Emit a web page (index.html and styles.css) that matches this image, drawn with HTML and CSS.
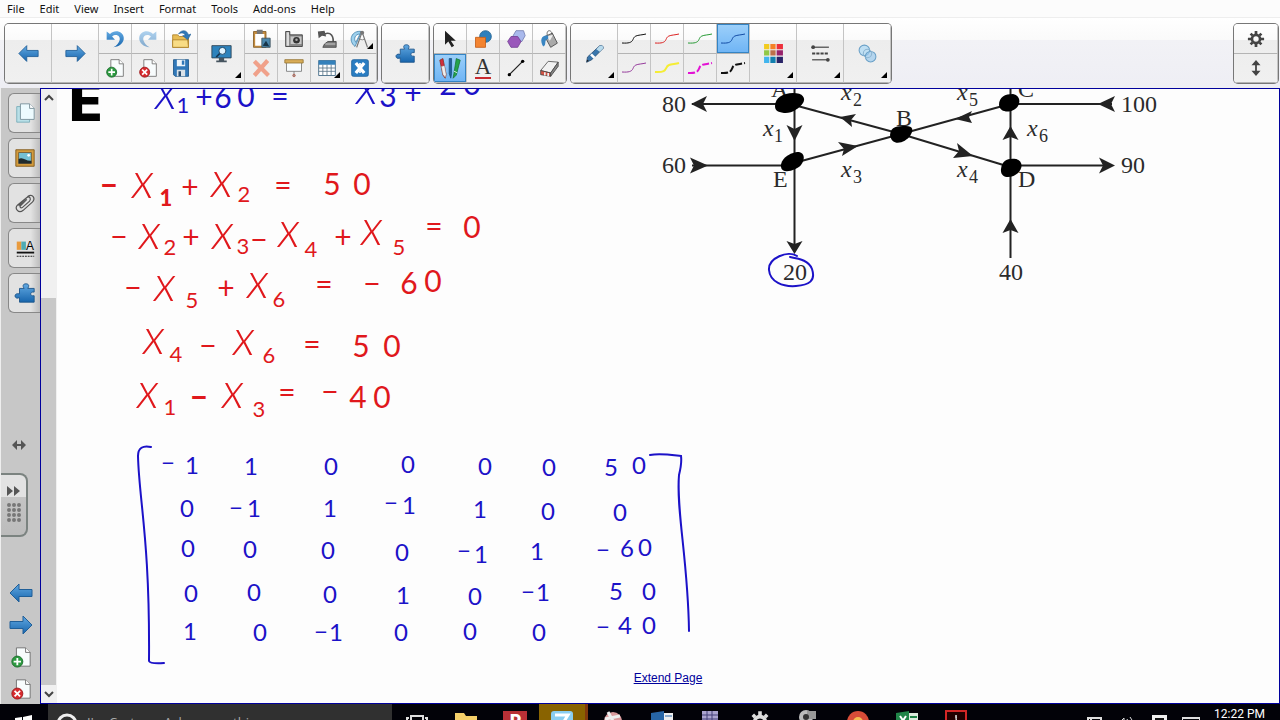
FILE: index.html
```html
<!DOCTYPE html>
<html lang="en">
<head>
<meta charset="utf-8">
<title>Notebook</title>
<link rel="stylesheet" href="styles.css">
</head>
<body>
<svg class="defs" aria-hidden="true">
  <defs>
    <linearGradient id="blue" x1="0" y1="0" x2="0" y2="1"><stop offset="0" stop-color="#62a9e2"/><stop offset="1" stop-color="#1765ad"/></linearGradient>
    <symbol id="left" viewBox="0 0 24 20"><path d="M1 10L10 1v5.500h13v7H10V19z" fill="url(#blue)" stroke="#205f98"/></symbol>
    <symbol id="right" viewBox="0 0 24 20"><path d="M23 10L14 1v5.500H1v7h13V19z" fill="url(#blue)" stroke="#205f98"/></symbol>
    <symbol id="undo" viewBox="0 0 24 24"><path d="M2 3v10h10L8.500 9C13 5 19 8 17.500 13.500 16.500 17 14 20 10 22c8-1 13-6 12.500-11.500C22 3 12 0 6 6z" fill="url(#blue)"/></symbol>
    <symbol id="page" viewBox="0 0 24 24"><path d="M7 2h10l5 5v15H7z" fill="#f8fcfd" stroke="#6d6d6d"/><path d="M17 2v5h5" fill="#fff" stroke="#6d6d6d"/></symbol>
    <symbol id="addpage" viewBox="0 0 24 24"><use href="#page"/><circle cx="8" cy="17" r="6" fill="#2d9a41" stroke="#1b6b2b"/><path d="M8 13v8M4 17h8" stroke="#fff" stroke-width="2"/></symbol>
    <symbol id="delpage" viewBox="0 0 24 24"><use href="#page"/><circle cx="8" cy="17" r="6" fill="#d82b2f" stroke="#99191d"/><path d="M5 14l6 6M11 14l-6 6" stroke="#fff" stroke-width="2"/></symbol>
    <symbol id="open" viewBox="0 0 24 24"><path d="M2 7h6l2 2h11v13H2z" fill="#e8bd55" stroke="#ad8129"/><path d="M2 13h18l1 9H2z" fill="#f8dc85" stroke="#ad8129"/><path d="M9 6c4-6 10-5 12 1l3-1-4 7-6-5 3-.5C15.500 4.500 13 4 9 6z" fill="#3179b8" stroke="#215d93" stroke-width=".6"/></symbol>
    <symbol id="save" viewBox="0 0 24 24"><path d="M3 2h18v20H5l-2-2z" fill="#3178b8" stroke="#1d5587"/><path d="M7 2h10v8H7z" fill="#eef5fa"/><path d="M13 3h3v5h-3z" fill="#3178b8"/><path d="M7 14h10v8H7z" fill="#dae2e8"/><path d="M9 16h3v6H9z" fill="#294d70"/></symbol>
    <symbol id="screen" viewBox="0 0 24 24"><path d="M1 3h22v14H1z" fill="#2d83bd" stroke="#2d4356"/><path d="M9 17h6v3h3v2H6v-2h3z" fill="#46545f"/><circle cx="13" cy="9" r="4" fill="#dff3ff" stroke="#173e5d"/><path d="M10 12l-4 4" stroke="#143653" stroke-width="2"/></symbol>
    <symbol id="paste" viewBox="0 0 24 24"><path d="M3 3h15v19H3z" fill="#c38b3d" stroke="#835d28"/><path d="M5 6h11v14H5z" fill="#fff"/><path d="M7 1h7v5H7z" fill="#777"/><path d="M13 11h10v11H13z" fill="#4a87ad" stroke="#3b4d58"/><path d="M14 20l4-6 4 7z" fill="#17354a"/></symbol>
    <symbol id="camera" viewBox="0 0 24 24"><path d="M2 3h5v4h15v14H2z" fill="#8a8a8a" stroke="#393939"/><path d="M3 4h3v16H3z" fill="#ddd"/><path d="M8 9h13v9H8z" fill="#c7c7c7"/><circle cx="15" cy="13.500" r="4" fill="#333"/><circle cx="15" cy="13" r="1.500" fill="#aaa"/></symbol>
    <symbol id="doccam" viewBox="0 0 24 24"><path d="M9 6c7-3 12 2 10 13" fill="none" stroke="#555" stroke-width="2"/><path d="M1 3l8-1 2 7-5-1-4 3z" fill="#555"/><path d="M9 18l4-3h10v7H7z" fill="#777" stroke="#444"/><path d="M10 18h12" stroke="#ddd"/></symbol>
    <symbol id="compass" viewBox="0 0 24 24"><path d="M14 3C2 1-3 14 6 21z" fill="#9ed1ee" stroke="#4886ae"/><path d="M12 6c-6 0-8 6-5 10z" fill="#fff" stroke="#4886ae"/><path d="M14 5L8 22M15 5l6 17" stroke="#777" stroke-width="1.500"/><circle cx="14.500" cy="4.500" r="2.500" fill="#777"/><path d="M11 12q4 2 7 0" fill="none" stroke="#777"/></symbol>
    <symbol id="delete" viewBox="0 0 24 24"><path d="M4 4l17 17M20 3L4 21" stroke="#f0a18a" stroke-width="5"/></symbol>
    <symbol id="shade" viewBox="0 0 24 24"><path d="M3 4h18v12H3z" fill="#f7fcff" stroke="#777"/><path d="M1 2h22v4H1z" fill="#d7ad59" stroke="#967636"/><path d="M12 16v4" stroke="#777"/><circle cx="12" cy="21" r="1.500" fill="#999" stroke="#b85c4a"/></symbol>
    <symbol id="table" viewBox="0 0 24 24"><path d="M2 3h20v18H2z" fill="#fff" stroke="#37617f"/><path d="M2 3h20v5H2z" fill="#3481bb"/><path d="M7 8v13M12 8v13M17 8v13M2 12h20M2 16h20" stroke="#5b7688"/></symbol>
    <symbol id="active" viewBox="0 0 24 24"><rect x="2" y="2" width="20" height="20" rx="2" fill="#2a7dc2" stroke="#1f639d"/><path d="M7 6l10 12M17 6L7 18" fill="none" stroke="#fff" stroke-width="4"/><path d="M12 6v3M12 15v3" stroke="#fff" stroke-width="2"/></symbol>
    <symbol id="puzzle" viewBox="0 0 24 24"><path d="M6 7h5c-2-3-1-5 2-5s4 2 2 5h7v4c-5-1-5 5 0 4v7H6v-5c-6 3-7-6 0-4z" fill="url(#blue)" stroke="#1f568b"/></symbol>
    <symbol id="cursor" viewBox="0 0 24 24"><path d="M6 2v17l4-4 4 7 3-2-4-6h6z" fill="#222"/></symbol>
    <symbol id="shapes" viewBox="0 0 24 24"><circle cx="15" cy="9" r="7" fill="#2e80bd" stroke="#20608f"/><path d="M3 10h12v12H3z" fill="#f38431" stroke="#c45e18"/></symbol>
    <symbol id="poly" viewBox="0 0 24 24"><path d="M12 2h9l2 6-4 7h-8l-3-6z" fill="#a9b9ec" stroke="#7580b3"/><path d="M6 9h8l4 6-4 7H6l-4-7z" fill="#9957ba" stroke="#744094"/></symbol>
    <symbol id="fill" viewBox="0 0 24 24"><path d="M7 9l9-4 6 12-8 5z" fill="#aaa" stroke="#444"/><path d="M10 8c-2-8 6-8 6 0" fill="none" stroke="#555"/><path d="M9 9l8-2-4 7z" fill="#eee"/><path d="M11 8C2 7 1 14 5 21c5-2 0-8 6-9z" fill="#3985c2"/></symbol>
    <symbol id="pens" viewBox="0 0 30 28"><path d="M2 4l4-2 4 20-1 5-3-4z" fill="#d22e3e" stroke="#832"/><path d="M4 12l4-1 2 11-1 4-3-4z" fill="#eee" stroke="#999" stroke-width=".5"/><path d="M14 2h3v19l-1 6-2-6z" fill="#215f9b" stroke="#165282"/><path d="M23 2l5 2-5 19-4 4 1-6z" fill="#24a34b" stroke="#17753a"/><path d="M20 18l4 2" stroke="#fff"/></symbol>
    <symbol id="line" viewBox="0 0 24 24"><path d="M4 20L20 4" stroke="#222" stroke-width="1.500"/><circle cx="4" cy="20" r="2"/><circle cx="20" cy="4" r="2"/></symbol>
    <symbol id="eraser" viewBox="0 0 24 24"><path d="M2 15L11 4l12 1-9 13z" fill="#f2f2f2" stroke="#555"/><path d="M2 15l12 3v4L2 20z" fill="#d55344" stroke="#444"/><path d="M14 18l9-13v5l-9 12z" fill="#888" stroke="#444"/><path d="M7 17v4M11 18v4" stroke="#eee" stroke-width="2"/></symbol>
    <symbol id="pen" viewBox="0 0 24 24"><path d="M3 22l1-6L18 3q4-1 4 3L9 19z" fill="#3976ac" stroke="#315578"/><path d="M14 7l4-4q4-1 4 3l-4 4z" fill="#b9dbed"/><path d="M8 13l4 4" stroke="#fff" stroke-width="3"/><path d="M3 22l.5-3 2 1z" fill="#222"/></symbol>
    <symbol id="stroke" viewBox="0 0 26 14"><path d="M1 11c14 1 9-5 14-7 2-1 6-1 10-2" fill="none" stroke="currentColor"/></symbol>
    <symbol id="thick" viewBox="0 0 26 14"><path d="M1 11c14 1 9-5 14-7 2-1 6-1 10-2" fill="none" stroke="currentColor" stroke-width="2"/></symbol>
    <symbol id="dash" viewBox="0 0 26 14"><path d="M1 12c14 1 9-6 14-8 2-1 6-1 10-2" fill="none" stroke="currentColor" stroke-width="2" stroke-dasharray="7 2"/></symbol>
    <symbol id="palette" viewBox="0 0 20 20"><path d="M1 1h5v5H1z" fill="#f2cb1f"/><path d="M7 1h5v5H7z" fill="#f58126"/><path d="M13 1h6v5h-6z" fill="#ed303b"/><path d="M1 7h5v5H1z" fill="#91c847"/><path d="M7 7h5v5H7z" fill="#bd704a"/><path d="M13 7h6v5h-6z" fill="#97216b"/><path d="M1 13h5v6H1z" fill="#42b5ee"/><path d="M7 13h5v6H7z" fill="#127fae"/><path d="M13 13h6v6h-6z" fill="#292467"/></symbol>
    <symbol id="lines" viewBox="0 0 20 20"><path d="M2 4h16M2 16h16" stroke="#666" stroke-width="1.500"/><path d="M2 10h16" stroke="#444" stroke-width="2" stroke-dasharray="3 1"/><circle cx="3" cy="4" r="1.800" fill="#444"/><circle cx="17" cy="16" r="1.800" fill="#444"/></symbol>
    <symbol id="clear" viewBox="0 0 20 20"><circle cx="7" cy="7" r="5" fill="#bfdff3" stroke="#6aa0c7"/><circle cx="13" cy="13" r="5" fill="#9bcbee" fill-opacity=".7" stroke="#6aa0c7"/><circle cx="10" cy="10" r="4" fill="none" stroke="#8db5d1"/></symbol>
    <symbol id="gear" viewBox="0 0 20 20"><circle cx="10" cy="10" r="4.500" fill="none" stroke="currentColor" stroke-width="3"/><path d="M10 1v4M10 15v4M1 10h4M15 10h4M4 4l2 2M14 14l2 2M16 4l-2 2M4 16l2-2" stroke="currentColor" stroke-width="3"/></symbol>
    <symbol id="updown" viewBox="0 0 20 20"><path d="M10 1l5 6H5zM10 19l5-6H5z" fill="#444"/><path d="M10 5v10" stroke="#444" stroke-width="2"/></symbol>
    <symbol id="pages" viewBox="0 0 24 24"><path d="M3 5h14v17H3z" fill="#b9e0e8" stroke="#79aeba"/><path d="M7 2h10l5 5v12H7z" fill="#edfbff" stroke="#79919a"/><path d="M17 2v5h5" fill="#fff" stroke="#79919a"/></symbol>
    <symbol id="gallery" viewBox="0 0 24 24"><path d="M2 3h20v18H2z" fill="#d39b3c" stroke="#815b1e"/><path d="M5 6h14v12H5z" fill="#74c0d3" stroke="#7b5f36"/><path d="M5 13c5-3 8 3 14 2v3H5z" fill="#202b2d"/><circle cx="16" cy="9" r="1.500" fill="#fff"/></symbol>
    <symbol id="clip" viewBox="0 0 24 24"><path d="M5 15L15 5c5-4 9 2 5 6L10 20c-5 4-10-2-6-6L14 6c3-2 5 1 3 4l-8 7c-2 1-3-1-2-2l7-7" fill="none" stroke="#555" stroke-width="1.300"/></symbol>
  </defs>
</svg>

<div class="app">
  <nav class="menu">
    <button>File</button><button>Edit</button><button>View</button><button>Insert</button><button>Format</button><button>Tools</button><button>Add-ons</button><button>Help</button>
  </nav>

  <div class="toolbar">
    <div class="group">
      <button class="big" aria-label="Previous page"><svg><use href="#left"/></svg></button>
      <button class="big" aria-label="Next page"><svg><use href="#right"/></svg></button>
      <button aria-label="Undo"><svg><use href="#undo"/></svg></button>
      <button aria-label="Add page"><svg><use href="#addpage"/></svg></button>
      <button aria-label="Redo" class="faded"><svg><use href="#undo" transform="matrix(-1 0 0 1 20 0)"/></svg></button>
      <button aria-label="Delete page"><svg><use href="#delpage"/></svg></button>
      <button aria-label="Open"><svg><use href="#open"/></svg></button>
      <button aria-label="Save"><svg><use href="#save"/></svg></button>
      <button class="big more" aria-label="View screens"><svg><use href="#screen"/></svg></button>
      <button aria-label="Paste"><svg><use href="#paste"/></svg></button>
      <button aria-label="Delete"><svg><use href="#delete"/></svg></button>
      <button aria-label="Capture"><svg><use href="#camera"/></svg></button>
      <button aria-label="Screen shade"><svg><use href="#shade"/></svg></button>
      <button aria-label="Document camera"><svg><use href="#doccam"/></svg></button>
      <button class="more" aria-label="Table"><svg><use href="#table"/></svg></button>
      <button class="more" aria-label="Measurement tools"><svg><use href="#compass"/></svg></button>
      <button aria-label="Activities"><svg><use href="#active"/></svg></button>
    </div>
    <div class="group">
      <button class="big" aria-label="Add-ons"><svg><use href="#puzzle"/></svg></button>
    </div>
    <div class="group">
      <button aria-label="Select"><svg><use href="#cursor"/></svg></button>
      <button class="on" aria-label="Pens"><svg class="pens"><use href="#pens"/></svg></button>
      <button aria-label="Shapes"><svg><use href="#shapes"/></svg></button>
      <button class="letter" aria-label="Text"><span>A</span></button>
      <button aria-label="Polygons"><svg><use href="#poly"/></svg></button>
      <button aria-label="Lines"><svg><use href="#line"/></svg></button>
      <button aria-label="Fill"><svg><use href="#fill"/></svg></button>
      <button aria-label="Eraser"><svg><use href="#eraser"/></svg></button>
    </div>
    <div class="group">
      <button class="big more" aria-label="Pen type"><svg><use href="#pen"/></svg></button>
      <button class="c-black" aria-label="Black pen"><svg class="wide"><use href="#stroke"/></svg></button>
      <button class="c-purple" aria-label="Purple pen"><svg class="wide"><use href="#stroke"/></svg></button>
      <button class="c-red" aria-label="Red pen"><svg class="wide"><use href="#stroke"/></svg></button>
      <button class="c-yellow" aria-label="Yellow highlighter"><svg class="wide"><use href="#thick"/></svg></button>
      <button class="c-green" aria-label="Green pen"><svg class="wide"><use href="#stroke"/></svg></button>
      <button class="c-pink" aria-label="Pink dashed pen"><svg class="wide"><use href="#dash"/></svg></button>
      <button class="c-blue on" aria-label="Blue pen"><svg class="wide"><use href="#stroke"/></svg></button>
      <button class="c-black" aria-label="Black dashed pen"><svg class="wide"><use href="#dash"/></svg></button>
      <button class="big more" aria-label="Colour"><svg><use href="#palette"/></svg></button>
      <button class="big more" aria-label="Line style"><svg><use href="#lines"/></svg></button>
      <button class="big more" aria-label="Transparency"><svg><use href="#clear"/></svg></button>
    </div>
    <div class="group settings">
      <button aria-label="Settings"><svg><use href="#gear"/></svg></button>
      <button aria-label="Move toolbar"><svg><use href="#updown"/></svg></button>
    </div>
  </div>

  <div class="work">
    <aside class="side">
      <div class="tabs">
        <button aria-label="Pages"><svg><use href="#pages"/></svg></button>
        <button aria-label="Gallery"><svg><use href="#gallery"/></svg></button>
        <button aria-label="Attachments"><svg><use href="#clip"/></svg></button>
        <button aria-label="Properties"><svg viewBox="0 0 24 24"><path d="M3 5h5v9H3z" fill="#e99b3e"/><path d="M8 5h5v9H8z" fill="#4eabb5"/><text x="13" y="14" font-size="13">A</text><path d="M3 17h19" stroke="#111" stroke-width="2"/><path d="M3 21h19" stroke="#111" stroke-dasharray="2 1"/></svg></button>
        <button aria-label="Add-ons"><svg><use href="#puzzle"/></svg></button>
      </div>
      <button class="resize" aria-label="Resize"><svg viewBox="0 0 16 12"><path d="M1 6l5-5v4h4V1l5 5-5 5V7H6v4z" fill="#555"/></svg></button>
      <button class="handle" aria-label="Expand"><svg viewBox="0 0 16 44"><path d="M1 3l6 5-6 5zM8 3l6 5-6 5z" fill="#555"/><path d="M3 22h12M3 27h12M3 32h12M3 37h12" stroke="#777" stroke-width="4" stroke-dasharray="0 5" stroke-linecap="round"/></svg></button>
      <div class="paging">
        <button aria-label="Previous page"><svg><use href="#left"/></svg></button>
        <button aria-label="Next page"><svg><use href="#right"/></svg></button>
        <button aria-label="Add page"><svg><use href="#addpage"/></svg></button>
        <button aria-label="Delete page"><svg><use href="#delpage"/></svg></button>
      </div>
    </aside>

    <div class="scroll">
      <button aria-label="Scroll up"><svg viewBox="0 0 10 8"><path d="M1 6l4-4 4 4" fill="none" stroke="#444" stroke-width="2"/></svg></button>
      <div class="track"><div class="thumb"></div></div>
      <button aria-label="Scroll down"><svg viewBox="0 0 10 8"><path d="M1 2l4 4 4-4" fill="none" stroke="#444" stroke-width="2"/></svg></button>
    </div>

    <main class="canvas">
      <svg class="ink">
        <g transform="translate(-57 -89)">
          <g class="net">
            <path class="edges" d="M692 104H790M794.500 80V250M692 165.500H794M794 105L901 134L1010 167M794 163L901 134L1010 104M1010 104H1112M1010 165.500H1108M1010.500 80V258"/>
            <g class="heads">
              <path d="M691 104l16-8-4 8 4 8z"/><path d="M708 165.500l-18-8 4 8-4 8z"/>
              <path d="M794.500 141l-8-16 8 4 8-4z"/><path d="M794.500 254l-8-13 8 3 8-3z"/>
              <path d="M1098 104l17-8-4 8 4 8z"/><path d="M1115 165.500l-16-8 4 8-4 8z"/>
              <path d="M1010.500 126l-8 14 8-3 8 3z"/><path d="M1010.500 219l-8 14 8-3 8 3z"/>
              <path d="M840 117l12 10-1-7 5-6z"/><path d="M955 119l17-8-3 6 3 6z"/>
              <path d="M858 146l-20-4 6 7-2 7z"/><path d="M973 156l-16-13 2 8-6 7z"/>
            </g>
            <text x="662" y="112">80</text><text x="662" y="173">60</text><text x="1121" y="112">100</text><text x="1121" y="173">90</text>
            <text x="783" y="280">20</text><text x="999" y="280">40</text>
            <text x="771" y="97">A</text><text x="896" y="126">B</text><text x="1018" y="97">C</text><text x="1018" y="187">D</text><text x="773" y="187">E</text>
            <text x="763 774" y="136 142"><tspan class="i">x</tspan><tspan class="s">1</tspan></text>
            <text x="841 853" y="100 106"><tspan class="i">x</tspan><tspan class="s">2</tspan></text>
            <text x="841 853" y="177 183"><tspan class="i">x</tspan><tspan class="s">3</tspan></text>
            <text x="957 969" y="177 183"><tspan class="i">x</tspan><tspan class="s">4</tspan></text>
            <text x="957 969" y="100 106"><tspan class="i">x</tspan><tspan class="s">5</tspan></text>
            <text x="1027 1039" y="136 142"><tspan class="i">x</tspan><tspan class="s">6</tspan></text>
          </g>
          <g class="nodes">
            <path d="M775 106c0-8 8-13 18-13s13 5 10 10-12 11-19 10-9-3-9-7z"/>
            <path d="M781 167c-1-8 9-15 18-15 6 1 6 8 2 13s-19 10-20 2z"/>
            <path d="M890 135c1-9 7-9 16-9 7 0 8 4 4 10s-18 12-20-1z"/>
            <path d="M999 105c0-8 6-11 14-11 6 1 8 7 5 12-4 7-18 8-19-1z"/>
            <path d="M1001 169c1-9 7-11 15-10 7 2 7 9 2 14s-18 7-17-4z"/>
          </g>
          <path class="pen blue" d="M797 256C788 250 768 258 769 270c1 12 14 17 27 16 13-1 20-5 16-17-3-8-11-10-22-12"/>

          <text class="marker" x="67" y="121">E</text>
          <text class="hand blue" x="166 183 204 223 246 280 367 388 413 448 472" y="109 113 108 108 107 107 104 107 104 95 95"><tspan class="v">x</tspan><tspan class="s">1</tspan>+60=<tspan class="v">x</tspan>3+20</text>
          <text class="hand red" x="109 143 166 190 222 244 283 332 362" y="196 198 206 198 197 202 196 195 195"><tspan class="b">−</tspan><tspan class="v">x</tspan><tspan class="s b">1</tspan>+<tspan class="v">x</tspan><tspan class="s">2</tspan>=50</text>
          <text class="hand red" x="119 150 170 191 223 243 259 289 311 343 372 399 434 472" y="247 249 255 248 249 254 250 247 257 248 245 255 237 238">−<tspan class="v">x</tspan><tspan class="s">2</tspan>+<tspan class="v">x</tspan><tspan class="s">3</tspan>−<tspan class="v">x</tspan><tspan class="s">4</tspan>+<tspan class="v">x</tspan><tspan class="s">5</tspan>=0</text>
          <text class="hand red" x="133 165 192 226 258 279 324 372 409 433" y="298 301 308 299 298 307 295 294 294 292">−<tspan class="v">x</tspan><tspan class="s">5</tspan>+<tspan class="v">x</tspan><tspan class="s">6</tspan>=−60</text>
          <text class="hand red" x="154 176 208 244 269 312 361 392" y="354 362 356 355 363 355 357 357"><tspan class="v">x</tspan><tspan class="s">4</tspan>−<tspan class="v">x</tspan><tspan class="s">6</tspan>=50</text>
          <text class="hand red" x="148 170 199 233 259 287 330 358 382" y="408 415 408 408 417 403 402 408 408"><tspan class="v">x</tspan><tspan class="s">1</tspan><tspan class="b">−</tspan><tspan class="v">x</tspan><tspan class="s">3</tspan>=−40</text>

          <path class="pen blue" d="M151 447C143 445 138 448 138 456C139 500 150 540 149 661Q150 664 164 663"/>
          <path class="pen blue" d="M650 455C660 453 672 455 681 456Q682 463 679 475C676 510 688 560 689 631"/>
          <g class="hand blue matrix">
            <text x="168 192 251 331 408 485 549 611 639" y="471 474 475 475 473 475 476 476 474">−11000050</text>
            <text x="187 236 254 330 391 409 480 548 620" y="517 516 517 517 511 514 518 520 521">0−11−1100</text>
            <text x="188 250 328 402 464 481 537 603 627 645" y="557 558 559 561 559 563 560 558 557 556">0000−11−60</text>
            <text x="191 254 330 403 475 528 543 616 649" y="602 601 603 604 605 600 601 600 600">00010−150</text>
            <text x="190 260 321 336 401 470 539 603 625 649" y="640 641 640 641 641 640 641 635 634 634">10−1000−40</text>
          </g>
        </g>
      </svg>
      <a class="extend" href="#">Extend Page</a>
    </main>
  </div>

  <footer class="taskbar">
    <button class="start" aria-label="Start"><svg viewBox="0 0 18 18"><path d="M0 3l7-1v7H0zM8 2l9-2v9H8zM0 10h7v6l-7-1zM8 10h9v8l-9-1z" fill="#fff"/></svg></button>
    <div class="search"><svg viewBox="0 0 22 22"><circle cx="11" cy="11" r="9" fill="none" stroke="#eee" stroke-width="3"/></svg><span>I'm Cortana. Ask me anything.</span></div>
    <div class="apps">
      <button aria-label="Task view"><svg viewBox="0 0 24 24"><path d="M6 6h12v12H6zM4 8H2v8h2M20 8h2v8h-2" fill="none" stroke="#ddd" stroke-width="2"/></svg></button>
      <button aria-label="Files"><svg viewBox="0 0 24 24"><path d="M1 3h9l2 3h11v16H1z" fill="#f4cf69"/></svg></button>
      <button aria-label="PowerPoint"><svg viewBox="0 0 24 24"><path d="M0 1h24v22H0z" fill="#b93036"/><text x="6" y="18" font-size="20" font-weight="700" fill="#fff">P</text></svg></button>
      <button class="current" aria-label="Notebook"><svg viewBox="0 0 24 24"><rect x="1" y="1" width="22" height="22" rx="3" fill="#8acdf0"/><path d="M5 5h13l-5 8" fill="none" stroke="#fff" stroke-width="3"/></svg></button>
      <button aria-label="Paint"><svg viewBox="0 0 24 24"><circle cx="12" cy="11" r="9" fill="#d99a9c"/><path d="M7 2l10 18M4 9l15-3" stroke="#eee" stroke-width="3"/></svg></button>
      <button aria-label="Word"><svg viewBox="0 0 24 24"><path d="M9 3h14v20H9z" fill="#eee"/><path d="M1 3l13-2v22L1 21z" fill="#2765a6"/><path d="M15 6h7" stroke="#2765a6"/></svg></button>
      <button aria-label="Server"><svg viewBox="0 0 24 24"><path d="M3 1h16v22H3z" fill="#aaa3ce"/><path d="M8 1v22M13 1v22M3 5h16M3 9h16" stroke="#444078"/></svg></button>
      <button class="white" aria-label="Settings"><svg viewBox="0 0 20 20"><use href="#gear"/></svg></button>
      <button aria-label="Camera"><svg viewBox="0 0 24 24"><circle cx="9" cy="7" r="7" fill="#bbb"/><path d="M10 1h9v8h-9z" fill="#999"/><circle cx="9" cy="7" r="3" fill="#333"/></svg></button>
      <button aria-label="Browser"><svg viewBox="0 0 24 24"><circle cx="12" cy="12" r="11" fill="#d84c38"/><circle cx="12" cy="12" r="5" fill="#f5bc50"/></svg></button>
      <button aria-label="Excel"><svg viewBox="0 0 24 24"><path d="M9 3h14v20H9z" fill="#ddebdd"/><path d="M1 3l13-2v22L1 21z" fill="#208448"/><path d="M5 6l6 9M11 6l-6 9" stroke="#fff" stroke-width="2"/><path d="M15 7h7" stroke="#208448" stroke-width="2"/></svg></button>
      <button aria-label="Reader"><svg viewBox="0 0 24 24"><path d="M2 1h20v22H2z" fill="#200" stroke="#d32626" stroke-width="2"/><path d="M12 5c-2 6 5 8 7 9M12 5c2 5-3 10-6 11" fill="none" stroke="#ddd"/></svg></button>
    </div>
    <div class="tray">
      <svg viewBox="0 0 18 14"><path d="M2 3h13v9H2zM5 3v9" fill="none" stroke="#ddd" stroke-width="2"/></svg>
      <svg viewBox="0 0 18 14"><path d="M2 7l4-4v9M9 4q3 3 0 7M12 2q5 6 0 11" fill="none" stroke="#ddd"/></svg>
      <svg viewBox="0 0 18 14"><path d="M2 0h15v14H2z" fill="#eee"/><path d="M5 4h9" stroke="#111" stroke-width="2"/></svg>
      <svg viewBox="0 0 18 14"><path d="M0 3h18v11H0z" fill="none" stroke="#ddd" stroke-width="2"/></svg>
      <time>12:22 PM</time>
    </div>
  </footer>
</div>
</body>
</html>
```
FILE: styles.css
```css
* { box-sizing: border-box; }
body { margin: 0; background: #fcfcfc; color: #111; font-family: "Open Sans", "Noto Sans", sans-serif; }
button { display: flex; align-items: center; justify-content: center; margin: 0; padding: 0; border: 0; background: none; color: inherit; font: inherit; }
.defs { position: absolute; width: 0; height: 0; }
.app { display: flex; flex-direction: column; height: 100vh; overflow: hidden; }

.menu { display: flex; gap: 15px; padding: 0 7px; height: 18px; flex: none; font-family: "Noto Sans", sans-serif; font-size: 11px; line-height: 18px; border-bottom: 1px solid #eee; }

.toolbar { display: flex; gap: 5px; flex: none; height: 70px; padding: 6px 2px 5px 5px; background: linear-gradient(#fff, #fafafa 22px, #f2f2f6 22px, #eeeef4); }
.group { display: grid; grid-auto-flow: column; grid-template-rows: 30px 29px; border-radius: 4px; overflow: hidden; box-shadow: 0 0 0 1px #777; background: linear-gradient(#fff, #fafafa 16px, #ededed 16px, #f0f0f0); flex: none; }
.group button { position: relative; width: 33px; border-right: 1px solid #c4c4c4; border-bottom: 1px solid #b4b4b4; }
.group .big { grid-row: span 2; width: 47px; }
.group svg { width: 20px; height: 20px; }
.group .big svg { width: 21px; height: 21px; }
.group .wide { width: 26px; height: 24px; }
.group .pens { width: 24px; height: 22px; }
.group .faded svg { opacity: 0.5; }
.group .on { background: linear-gradient(#9dd0fa, #6eb4f5); box-shadow: inset 0 0 0 1px #3484c4; }
.more::after { content: ""; position: absolute; right: 3px; bottom: 4px; border-left: 6px solid transparent; border-bottom: 6px solid #000; }
.letter span { font-family: "Liberation Serif", serif; font-size: 23px; line-height: 20px; color: #333; border-bottom: 2px solid #c8292f; }
.settings { margin-left: auto; color: #444; }
.settings button { width: 44px; }
.settings svg { width: 18px; height: 18px; }
.c-black { color: #111; }
.c-red { color: #d22; }
.c-green { color: #279b35; }
.c-blue { color: #124ba5; }
.c-purple { color: #963b9c; }
.c-yellow { color: #f5ed35; }
.c-pink { color: #e313d4; }

.work { display: flex; flex: 1; min-height: 0; }
.side { display: flex; flex-direction: column; width: 40px; flex: none; padding-top: 5px; background: #c7c7c7; border-left: 1px solid #eee; }
.side svg { width: 22px; height: 22px; }
.tabs { display: flex; flex-direction: column; gap: 5px; margin-bottom: 80px; padding-left: 7px; }
.tabs button { height: 40px; border: 1px solid #888; border-right: 0; border-radius: 6px 0 0 6px; background: linear-gradient(90deg, #e2e2e2 70%, #bdbdbd); }
.tabs text { font-family: "Liberation Sans", sans-serif; }
.resize { width: 35px; height: 12px; margin-top: auto; }
.side .resize svg { width: 16px; height: 12px; }
.handle { width: 27px; height: 64px; margin: 22px 0 auto; border: 2px solid #7b8380; border-left: 0; border-radius: 0 8px 8px 0; background: linear-gradient(#e2e2e2 22px, #c4c4c4 22px, #bcbcbc); }
.side .handle svg { width: 16px; height: 44px; }
.paging { display: flex; flex-direction: column; gap: 10px; padding-bottom: 4px; }
.side .paging svg { width: 24px; height: 22px; }

.scroll { display: flex; flex-direction: column; width: 17px; flex: none; background: #f0f0f0; border: 1px solid #00009c; border-right: 0; }
.scroll button { height: 18px; }
.scroll svg { width: 10px; height: 8px; }
.track { display: flex; flex-direction: column; justify-content: flex-end; flex: 1; padding-right: 1px; }
.thumb { height: 67%; background: #c8c8c8; }

.canvas { display: flex; flex-direction: column; flex: 1; min-width: 0; background: #fdfdfd; border: 1px solid #00009c; border-left: 0; }
.ink { display: block; flex: 1; min-height: 0; width: 100%; }
.extend { align-self: center; flex: none; margin: -32px 0 18px; color: #00009c; font-family: "Liberation Sans", sans-serif; font-size: 12px; line-height: 14px; }

.net { font-family: "Liberation Serif", serif; font-size: 24px; fill: #2b2b2b; }
.net .i { font-style: italic; }
.net .s { font-size: 18px; }
.edges { fill: none; stroke: #222; stroke-width: 2px; }
.heads { fill: #222; }
.nodes { fill: #000; }
.hand { font-family: Lato, sans-serif; font-size: 30px; text-anchor: middle; }
.hand .v { font-weight: 300; font-style: italic; font-size: 50px; }
.hand .s { font-size: 22px; }
.hand .b { font-weight: 900; }
.matrix { font-size: 24px; }
.marker { font-family: "DejaVu Sans", sans-serif; font-weight: 700; font-size: 54px; fill: #000; }
.red { fill: #e0181c; }
.blue { fill: #1c12c8; }
.pen { fill: none; stroke: #1c12c8; stroke-width: 2px; stroke-linecap: round; }

.taskbar { display: flex; align-items: flex-start; flex: none; height: 16px; overflow: hidden; background: #020208; color: #fff; }
.start { width: 48px; height: 40px; }
.start svg { width: 18px; height: 18px; }
.search { display: flex; align-items: flex-start; gap: 9px; width: 344px; height: 40px; padding: 9px 8px; background: #303030; color: #aaa; font-size: 13px; line-height: 18px; }
.search svg { width: 22px; height: 22px; }
.apps { display: flex; }
.apps button { width: 49px; height: 36px; }
.apps svg { width: 24px; height: 24px; }
.apps text { font-family: "Open Sans", sans-serif; }
.apps .current { background: #896300; border-right: 3px solid #81380c; }
.apps .white { color: #ddd; }
.tray { display: flex; align-items: flex-start; gap: 14px; margin-left: auto; padding-right: 15px; }
.tray svg { width: 18px; height: 14px; margin-top: 11px; }
.tray time { font-family: Roboto, sans-serif; font-size: 12px; line-height: 20px; }
```
